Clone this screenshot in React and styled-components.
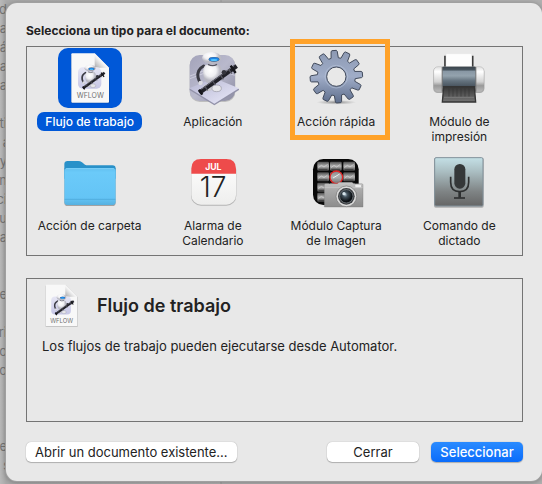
import React, { useState } from "react";
import styled, { createGlobalStyle, css } from "styled-components";

const GlobalStyle = createGlobalStyle`
  * { box-sizing: border-box; }
  body {
    margin: 0;
    background: #b2b2b2;
    font-family: Inter, "Liberation Sans", sans-serif;
    font-size: 13px;
    color: #222;
  }
  button { font: inherit; color: inherit; }
`;

const Page = styled.div`
  display: grid;
  grid-template-columns: minmax(0, 1fr);
  min-height: 100vh;
  overflow: hidden;
`;

const Backdrop = styled.div`
  grid-area: 1 / 1;
  background: linear-gradient(90deg, #b9b9b9, #a9a9a9 6px, #b3b3b3 220px, #9c9c9c 221px, #b0b0b0 222px);
  color: #747474;
  font-size: 13px;
  line-height: 19px;
`;

const BackdropLine = styled.div`
  display: flex;
  justify-content: flex-end;
  width: ${(p) => (p.$indent ? 10 : 7)}px;
  height: 19px;
`;

const Dialog = styled.main`
  grid-area: 1 / 1;
  display: flex;
  flex-direction: column;
  margin: 3px 0 3px 6px;
  padding: 18px 19px 19px 20px;
  border-radius: 11px;
  background: #e8e8e8;
  box-shadow: 0 0 0 1px #a0a0a0, 0 1px 5px 1px rgba(0, 0, 0, 0.25);
`;

const Title = styled.h1`
  margin: 0 0 5px;
  font-size: 12px;
  font-weight: 700;
  line-height: 20px;
`;

const Types = styled.div`
  display: grid;
  grid-template-columns: repeat(4, minmax(0, 1fr));
  grid-auto-rows: 104px;
  padding: 0 1px;
  border: 1px solid #747474;
`;

const TypeButton = styled.button`
  position: relative;
  display: flex;
  flex-direction: column;
  align-items: center;
  gap: 4px;
  padding: 1px 0 0;
  border: 0;
  background: none;
  font-size: 12px;
`;

const Tile = styled.span`
  display: block;
  width: 64px;
  height: 60px;
  border-radius: 10px;
  background: ${(p) => (p.$selected ? "#0058d8" : "none")};
  svg { display: block; width: 64px; height: 60px; }
`;

const TypeLabel = styled.span`
  padding: 2px 8px;
  border-radius: 7px;
  line-height: 15px;
  white-space: pre-line;
  ${(p) => p.$selected && css`
    background: #0058d8;
    color: #fff;
    font-weight: 500;
  `}
`;

const Highlight = styled.span`
  position: absolute;
  top: -8px;
  left: 15px;
  width: 100px;
  height: 101px;
  border: 5px solid #ffa229;
  pointer-events: none;
`;

const Detail = styled.section`
  flex: 1;
  min-height: 144px;
  margin: 22px 0 20px;
  padding: 5px 15px;
  border: 1px solid #747474;
`;

const DetailHeader = styled.div`
  display: flex;
  align-items: center;
  gap: 19px;
  padding-left: 3px;
  svg { display: block; width: 33px; height: 43px; }
`;

const DetailTitle = styled.h2`
  margin: 0;
  font-size: 18px;
  font-weight: 600;
  line-height: 24px;
`;

const DetailText = styled.p`
  margin: 11px 0 0;
  line-height: 16px;
`;

const Actions = styled.footer`
  display: flex;
  gap: 12px;
`;

const Action = styled.button`
  height: 20px;
  min-width: 92px;
  padding: 0 9px;
  border: 0;
  border-radius: 5px;
  line-height: 20px;
  white-space: nowrap;
  background: ${(p) => (p.$primary ? "linear-gradient(#2a8bff, #0a6cfb)" : "#fff")};
  color: ${(p) => (p.$primary ? "#fff" : "#222")};
  font-weight: ${(p) => (p.$primary ? 500 : 400)};
  box-shadow: 0 0 1px rgba(0, 0, 0, 0.35), 0 1px 1px rgba(0, 0, 0, 0.22);
`;

const Spacer = styled.div`
  flex: 1;
`;

function Robot() {
  return (
    <g>
      <path d="M68 54Q47 65 51 88Q53 99 60 106" fill="none" stroke="#3a3a43" strokeWidth="9" strokeLinecap="round" />
      <ellipse cx="80" cy="119" rx="14" ry="10" fill="#c9c9d0" />
      <ellipse cx="107" cy="121" rx="14" ry="10" fill="#e6e6ea" stroke="#9696a2" strokeWidth="2" />
      <path d="M75 50H112Q125 55 122 80Q118 108 92 109Q68 107 67 82Q64 57 75 50Z" fill="url(#shell)" />
      <path d="M81 49Q95 57 108 49" stroke="#555560" strokeWidth="4" fill="none" />
      <ellipse cx="92" cy="30" rx="29" ry="18" fill="url(#shell)" />
      <ellipse cx="99" cy="34" rx="16" ry="7" fill="#4a5a70" />
      <ellipse cx="99" cy="34" rx="15" ry="6" fill="#1c83e6" />
      <ellipse cx="99" cy="36" rx="10" ry="3" fill="#51c6ff" />
      <path d="M55 134L167 54" stroke="#202027" strokeWidth="13" />
      <path d="M61 124L160 53" stroke="#696974" strokeWidth="3" />
      <path d="M72 116l8 11M95 99l8 12M119 82l8 12M143 64l9 13" stroke="#55555f" strokeWidth="4" />
      <path d="M149 53l15 22M54 125l10 15" stroke="#17171c" strokeWidth="7" />
      <circle cx="59" cy="105" r="7" fill="#dcdce2" />
      <circle cx="129" cy="73" r="7" fill="#34343c" />
    </g>
  );
}

function ShellGradient() {
  return (
    <radialGradient id="shell" cx="40%" cy="30%">
      <stop offset="0" stopColor="#fff" />
      <stop offset="0.6" stopColor="#f0f0f3" />
      <stop offset="1" stopColor="#b9b9c3" />
    </radialGradient>
  );
}

function WorkflowIcon({ viewBox = "0 0 192 180" }) {
  return (
    <svg viewBox={viewBox} aria-hidden="true">
      <defs>
        <ShellGradient />
        <linearGradient id="fold" x1="0" y1="1" x2="1" y2="0">
          <stop offset="0" stopColor="#a9a9ab" />
          <stop offset="0.45" stopColor="#f6f6f6" />
          <stop offset="1" stopColor="#d0d0d0" />
        </linearGradient>
        <linearGradient id="badge" x1="0" y1="0" x2="0" y2="1">
          <stop offset="0" stopColor="#e6e6f4" />
          <stop offset="1" stopColor="#c6c6e6" />
        </linearGradient>
      </defs>
      <path d="M43 18H112L155 61V162Q155 166 151 166H43Q39 166 39 162V20Q39 18 43 18Z" fill="#000" opacity="0.22" />
      <path d="M43 16H110L153 59V161Q153 164 150 164H43Q40 164 40 161V19Q40 16 43 16Z" fill="#f8f8f8" />
      <path d="M110 16V54Q110 59 115 59H153Z" fill="url(#fold)" />
      <rect x="60" y="58" width="70" height="64" rx="14" fill="url(#badge)" />
      <g transform="translate(43 43) scale(0.58)"><Robot /></g>
      <text x="97" y="151" textAnchor="middle" fontFamily="Inter, sans-serif" fontSize="21" fontWeight="400" fill="#707070">WFLOW</text>
    </svg>
  );
}

function AutomatorIcon() {
  return (
    <svg viewBox="0 0 192 180" aria-hidden="true">
      <defs>
        <ShellGradient />
        <linearGradient id="room" x1="0" y1="0" x2="1" y2="1">
          <stop offset="0" stopColor="#a3a3ba" />
          <stop offset="0.5" stopColor="#b9b9cc" />
          <stop offset="1" stopColor="#8c8ca2" />
        </linearGradient>
        <linearGradient id="floor" x1="0" y1="0" x2="1" y2="1">
          <stop offset="0" stopColor="#b4b4d0" />
          <stop offset="1" stopColor="#ebebfb" />
        </linearGradient>
      </defs>
      <rect x="26" y="23" width="137" height="139" rx="30" fill="#000" opacity="0.18" />
      <rect x="26" y="21" width="136" height="138" rx="30" fill="url(#room)" />
      <path d="M27 84L95 58L161 82M27 92L95 66" stroke="#e0e0ec" strokeWidth="3" fill="none" opacity="0.6" />
      <path d="M26 126L100 172L174 126V122H26Z" fill="#9292a9" />
      <path d="M25 121L99 90L174 121L100 167Z" fill="url(#floor)" />
      <Robot />
    </svg>
  );
}

const gearPath = (() => {
  const point = (radius, degrees) => {
    const a = (degrees * Math.PI) / 180;
    return `${(97 + radius * Math.cos(a)).toFixed(1)} ${(86 + radius * Math.sin(a)).toFixed(1)}`;
  };
  const points = [];
  for (let i = 0; i < 12; i += 1) {
    const a = i * 30 - 5;
    points.push(point(57, a - 11), point(76, a - 7), point(79, a - 5), point(79, a + 5), point(76, a + 7), point(57, a + 11));
  }
  return `M${points.join("L")}Z M126 86A29 29 0 1 0 68 86A29 29 0 1 0 126 86Z`;
})();

function GearIcon() {
  return (
    <svg viewBox="0 0 192 180" aria-hidden="true">
      <defs>
        <linearGradient id="steel" x1="0" y1="0" x2="0" y2="1">
          <stop offset="0" stopColor="#8c99b3" />
          <stop offset="0.5" stopColor="#a0adc8" />
          <stop offset="1" stopColor="#5e6e8c" />
        </linearGradient>
        <radialGradient id="ground">
          <stop offset="0" stopColor="#555" stopOpacity="0.65" />
          <stop offset="1" stopColor="#777" stopOpacity="0" />
        </radialGradient>
      </defs>
      <ellipse cx="97" cy="163" rx="60" ry="7" fill="url(#ground)" />
      <path d={gearPath} fill="url(#steel)" fillRule="evenodd" stroke="#414a5b" strokeWidth="3" strokeLinejoin="round" />
      <circle cx="97" cy="86" r="34" fill="none" stroke="#c0cbe0" strokeWidth="3" opacity="0.5" />
    </svg>
  );
}

function PrinterIcon() {
  return (
    <svg viewBox="0 0 192 180" aria-hidden="true">
      <defs>
        <linearGradient id="caps" x1="0" y1="0" x2="0" y2="1">
          <stop offset="0" stopColor="#dedede" />
          <stop offset="0.2" stopColor="#fff" />
          <stop offset="0.6" stopColor="#d2d2d2" />
          <stop offset="0.75" stopColor="#999" />
          <stop offset="1" stopColor="#bcbcbc" />
        </linearGradient>
        <linearGradient id="drum" x1="0" y1="0" x2="0" y2="1">
          <stop offset="0" stopColor="#39424a" />
          <stop offset="0.18" stopColor="#4b5862" />
          <stop offset="0.2" stopColor="#8796a3" />
          <stop offset="0.45" stopColor="#94a3ae" />
          <stop offset="0.7" stopColor="#64727e" />
          <stop offset="1" stopColor="#46515b" />
        </linearGradient>
        <linearGradient id="tray" x1="0" y1="0" x2="0" y2="1">
          <stop offset="0" stopColor="#353535" />
          <stop offset="1" stopColor="#747474" />
        </linearGradient>
      </defs>
      <path d="M54 23V58M137 23V58" stroke="#333" strokeWidth="5" />
      <path d="M57 17H134V60H57Z" fill="#fdfdfd" stroke="#ddd" />
      <rect x="19" y="58" width="153" height="77" rx="13" fill="#000" opacity="0.25" />
      <rect x="20" y="56" width="151" height="76" rx="13" fill="url(#caps)" stroke="#999" strokeWidth="1" />
      <rect x="44" y="57" width="4" height="74" fill="#777" />
      <rect x="144" y="57" width="4" height="74" fill="#777" />
      <rect x="47" y="56" width="98" height="61" fill="url(#drum)" />
      <path d="M50 116H142L146 162H46Z" fill="url(#tray)" stroke="#353535" strokeWidth="4" />
      <path d="M66 122V146M78 122V146M90 122V146M102 122V146M114 122V146M126 122V146" stroke="#333" strokeWidth="3" opacity="0.55" />
      <path d="M51 148H141" stroke="#888" strokeWidth="2" />
    </svg>
  );
}

function FolderIcon() {
  return (
    <svg viewBox="0 0 192 180" aria-hidden="true">
      <defs>
        <linearGradient id="folder" x1="0" y1="0" x2="0" y2="1">
          <stop offset="0" stopColor="#62c0f0" />
          <stop offset="0.12" stopColor="#6bcaf9" />
          <stop offset="0.82" stopColor="#64c4f5" />
          <stop offset="1" stopColor="#56b1e0" />
        </linearGradient>
      </defs>
      <path d="M19 48H173V152Q173 162 163 162H29Q19 162 19 152Z" fill="#000" opacity="0.3" />
      <path d="M19 36Q19 27 29 27H60Q67 27 72 31L81 38Q84 40 90 40H163Q173 40 173 50V80H19Z" fill="#2991c9" />
      <path d="M19 56Q19 48 29 48H163Q173 48 173 56V150Q173 159 163 159H29Q19 159 19 150Z" fill="url(#folder)" />
      <path d="M20 142H172" stroke="#4aa5d4" strokeWidth="2" />
      <path d="M24 50H168" stroke="#8ad8fc" strokeWidth="2" />
    </svg>
  );
}

function CalendarIcon() {
  return (
    <svg viewBox="0 0 192 180" aria-hidden="true">
      <defs>
        <linearGradient id="page" x1="0" y1="0" x2="0" y2="1">
          <stop offset="0" stopColor="#fff" />
          <stop offset="1" stopColor="#eeeeed" />
        </linearGradient>
      </defs>
      <rect x="30" y="24" width="136" height="137" rx="30" fill="#000" opacity="0.22" />
      <rect x="31" y="21" width="134" height="137" rx="29" fill="url(#page)" />
      <path d="M31 65V50Q31 21 60 21H136Q165 21 165 50V65Z" fill="#ee4b4b" />
      <text x="97" y="55" textAnchor="middle" fontFamily="Inter, sans-serif" fontSize="26" fontWeight="700" fill="#fff">JUL</text>
      <text x="96" y="136" textAnchor="middle" fontFamily="Inter, sans-serif" fontSize="84" fontWeight="300" fill="#222">17</text>
    </svg>
  );
}

function CaptureIcon() {
  const columns = [40, 78, 118];
  const rows = [29, 61, 92, 122];
  return (
    <svg viewBox="0 0 192 180" aria-hidden="true">
      <defs>
        <linearGradient id="photo" x1="0" y1="0" x2="0" y2="1">
          <stop offset="0" stopColor="#4c4c4c" />
          <stop offset="0.5" stopColor="#b4b4b4" />
          <stop offset="1" stopColor="#484848" />
        </linearGradient>
        <linearGradient id="camera" x1="0" y1="0" x2="0" y2="1">
          <stop offset="0" stopColor="#c9c9c9" />
          <stop offset="0.3" stopColor="#aaa" />
          <stop offset="1" stopColor="#8c8c8c" />
        </linearGradient>
        <radialGradient id="glass" cx="42%" cy="38%">
          <stop offset="0" stopColor="#a5b9c6" />
          <stop offset="0.35" stopColor="#43525d" />
          <stop offset="1" stopColor="#0b0f13" />
        </radialGradient>
      </defs>
      <rect x="27" y="21" width="137" height="138" rx="31" fill="#080808" />
      {rows.map((y) => columns.map((x) => (
        <g key={`${x}-${y}`}>
          <rect x={x} y={y} width="35" height="27" rx="3" fill="url(#photo)" />
          <path d={`M${x + 3} ${y + 18}l9-7 8 5 11-8`} stroke="#ddd" strokeWidth="3" fill="none" opacity="0.6" />
          <path d={`M${x + 4} ${y + 23}h26`} stroke="#1a1a1a" strokeWidth="3" opacity="0.5" />
        </g>
      )))}
      <circle cx="97" cy="76" r="19" fill="#aaa" fillOpacity="0.75" stroke="#e22222" strokeWidth="4" />
      <path d="M87 78l20-12" stroke="#eee" strokeWidth="3" />
      <path d="M61 98Q61 95 66 95H100L105 91H144L149 95H173Q177 95 177 99V165H61Z" fill="url(#camera)" stroke="#777" strokeWidth="1" />
      <path d="M62 106H176" stroke="#ccc" strokeWidth="2" />
      <rect x="154" y="98" width="17" height="8" rx="2" fill="#eee" />
      <circle cx="127" cy="133" r="31" fill="#dadada" stroke="#777" strokeWidth="2" />
      <circle cx="127" cy="133" r="25" fill="#3b3e41" />
      <circle cx="127" cy="133" r="20" fill="url(#glass)" stroke="#889096" strokeWidth="2" />
      <circle cx="120" cy="125" r="5" fill="#d6e3ea" />
    </svg>
  );
}

function DictationIcon() {
  return (
    <svg viewBox="0 0 192 180" aria-hidden="true">
      <defs>
        <linearGradient id="plate" x1="0" y1="0" x2="0" y2="1">
          <stop offset="0" stopColor="#c4e0e6" />
          <stop offset="0.3" stopColor="#a9bcc0" />
          <stop offset="0.7" stopColor="#7f8485" />
          <stop offset="1" stopColor="#666" />
        </linearGradient>
      </defs>
      <rect x="21" y="18" width="149" height="149" rx="5" fill="#000" opacity="0.25" />
      <rect x="23" y="17" width="145" height="145" rx="4" fill="url(#plate)" stroke="#81909a" strokeWidth="3" />
      <rect x="82" y="36" width="33" height="74" rx="16" fill="#353839" />
      <path d="M71 74V91Q71 119 98 119Q125 119 125 91V74" fill="none" stroke="#2e3031" strokeWidth="5" />
      <path d="M98 120V137" stroke="#2e3031" strokeWidth="8" />
      <path d="M81 138H114" stroke="#2e3031" strokeWidth="5" />
    </svg>
  );
}

const documentTypes = [
  { id: "workflow", label: "Flujo de trabajo", Icon: WorkflowIcon },
  { id: "app", label: "Aplicación", Icon: AutomatorIcon },
  { id: "quick", label: "Acción rápida", Icon: GearIcon, highlighted: true },
  { id: "print", label: "Módulo de\nimpresión", Icon: PrinterIcon },
  { id: "folder", label: "Acción de carpeta", Icon: FolderIcon },
  { id: "calendar", label: "Alarma de\nCalendario", Icon: CalendarIcon },
  { id: "capture", label: "Módulo Captura\nde Imagen", Icon: CaptureIcon },
  { id: "dictation", label: "Comando de\ndictado", Icon: DictationIcon },
];

const backdropLines = [
  "d", "ca", "á", "ca", "ca", "", "ti", " a", "y", "n", "ci", "cu", "a", "", "",
  "e", "", "ri", "o", "o", "", "", "", "e", " s",
];

export default function App() {
  const [selected, setSelected] = useState("workflow");
  return (
    <Page>
      <GlobalStyle />
      <Backdrop aria-hidden="true">
        {backdropLines.map((line, i) => (
          <BackdropLine key={i} $indent={line.startsWith(" ")}>{line.trim()}</BackdropLine>
        ))}
      </Backdrop>
      <Dialog>
        <Title>Selecciona un tipo para el documento:</Title>
        <Types>
          {documentTypes.map(({ id, label, Icon, highlighted }) => (
            <TypeButton key={id} type="button" aria-pressed={selected === id} onClick={() => setSelected(id)}>
              <Tile $selected={selected === id}><Icon /></Tile>
              <TypeLabel $selected={selected === id}>{label}</TypeLabel>
              {highlighted && <Highlight />}
            </TypeButton>
          ))}
        </Types>
        <Detail>
          <DetailHeader>
            <WorkflowIcon viewBox="38 14 117 152" />
            <DetailTitle>Flujo de trabajo</DetailTitle>
          </DetailHeader>
          <DetailText>Los flujos de trabajo pueden ejecutarse desde Automator.</DetailText>
        </Detail>
        <Actions>
          <Action type="button">Abrir un documento existente...</Action>
          <Spacer />
          <Action type="button">Cerrar</Action>
          <Action type="button" $primary>Seleccionar</Action>
        </Actions>
      </Dialog>
    </Page>
  );
}
